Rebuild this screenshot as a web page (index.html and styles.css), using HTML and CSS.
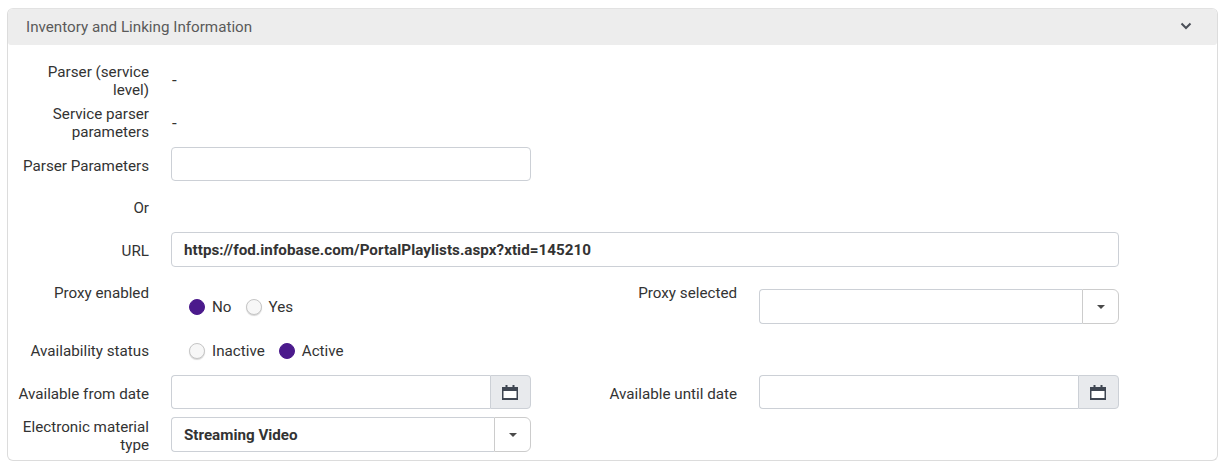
FILE: index.html
```html
<!DOCTYPE html>
<html lang="en">
<head>
<meta charset="utf-8">
<title>Inventory and Linking Information</title>
<link rel="stylesheet" href="styles.css">
</head>
<body>
<section class="panel">
  <header class="panel-head">
    <h2 class="panel-title">Inventory and Linking Information</h2>
    <svg class="chev" width="12" height="8" viewBox="0 0 12 8"><path d="M1.500 1.500 6 6l4.500-4.500" fill="none" stroke="#4a4f57" stroke-width="2"/></svg>
  </header>
  <div class="panel-body">
    <div class="row r1"><div class="label">Parser (service level)</div><div class="value">-</div></div>
    <div class="row r2"><div class="label">Service parser parameters</div><div class="value">-</div></div>
    <div class="row r3"><div class="label">Parser Parameters</div><div class="control half"><div class="input"></div></div></div>
    <div class="row r4"><div class="label">Or</div></div>
    <div class="row r5"><div class="label">URL</div><div class="control full"><div class="input bold url">https://fod.infobase.com/PortalPlaylists.aspx?xtid=145210</div></div></div>
    <div class="row r6">
      <div class="label top">Proxy enabled</div>
      <div class="control half radios low">
        <span class="radio on"></span><span class="rlabel">No</span>
        <span class="radio"></span><span class="rlabel">Yes</span>
      </div>
      <div class="label second top">Proxy selected</div>
      <div class="control half"><div class="group"><div class="input flat"></div><div class="caret-btn"><span class="caret"></span></div></div></div>
    </div>
    <div class="row r7">
      <div class="label">Availability status</div>
      <div class="control half radios">
        <span class="radio"></span><span class="rlabel">Inactive</span>
        <span class="radio on"></span><span class="rlabel">Active</span>
      </div>
    </div>
    <div class="row r8">
      <div class="label">Available from date</div>
      <div class="control half"><div class="group date"><div class="input flat"></div><div class="cal-btn"><svg width="16" height="16" viewBox="0 0 16 16"><path d="M0 3.500h16V16H0z" fill="#fff"/><path d="M0 3h16v4H0zM0 14h16v2H0zM0 3h1.500v13H0zM14.500 3H16v13h-1.500z" fill="#3f4652"/><path d="M3.500 1h2v3h-2zM10.500 1h2v3h-2z" fill="#3f4652"/></svg></div></div></div>
      <div class="label second">Available until date</div>
      <div class="control half"><div class="group date"><div class="input flat"></div><div class="cal-btn"><svg width="16" height="16" viewBox="0 0 16 16"><path d="M0 3.500h16V16H0z" fill="#fff"/><path d="M0 3h16v4H0zM0 14h16v2H0zM0 3h1.500v13H0zM14.500 3H16v13h-1.500z" fill="#3f4652"/><path d="M3.500 1h2v3h-2zM10.500 1h2v3h-2z" fill="#3f4652"/></svg></div></div></div>
    </div>
    <div class="row r9">
      <div class="label">Electronic material type</div>
      <div class="control half"><div class="group"><div class="input flat bold">Streaming Video</div><div class="caret-btn"><span class="caret"></span></div></div></div>
    </div>
  </div>
</section>
</body>
</html>
```
FILE: styles.css
```css
* { box-sizing: border-box; }
html, body { margin: 0; padding: 0; background: #fff; }
body {
  padding: 8px 7px 0;
  font-family: Roboto, "Liberation Sans", sans-serif;
  font-size: 15.2px;
  line-height: 18px;
  color: #333;
}
.panel {
  width: 1211px;
  height: 453px;
  border: 1px solid #dcdcdc;
  border-top-color: #e2e2e2;
  border-radius: 6px;
}
.panel-head {
  height: 36px;
  background: #ededed;
  border-radius: 5px 5px 3px 3px;
  display: flex;
  align-items: center;
  justify-content: space-between;
  padding: 0 25px 0 18px;
}
.panel-title { margin: 0; font-size: 15.2px; font-weight: 400; color: #5a5a5a; }
.chev { display: block; margin-top: -3px; }
.panel-body { padding-top: 18px; }
.row { display: flex; align-items: center; }
.label { width: 141px; padding-left: 8px; text-align: right; flex: none; }
.label.top { align-self: flex-start; margin-top: -5px; }
.label.second { width: 206px; }
.value { margin-left: 22px; padding-left: 1px; font-size: 17px; }
.control { margin-left: 22px; flex: none; }
.half { width: 360px; }
.full { width: 948px; }
.input {
  height: 34px;
  background: #fff;
  border: 1px solid #ccd0d6;
  border-radius: 4px;
  padding: 1px 12px 0;
  display: flex;
  align-items: center;
}
.bold { font-weight: 700; }
.url { letter-spacing: 0.035px; }
.group { display: flex; height: 34px; }
.group .flat { flex: 1; height: auto; border-radius: 4px 0 0 4px; border-right: 0; }
.caret-btn {
  width: 37px;
  border: 1px solid #ccc;
  border-radius: 0 6px 6px 0;
  display: flex;
  align-items: center;
  justify-content: center;
}
.caret { width: 0; height: 0; border: 4px solid transparent; border-top-color: #4a4a4a; border-bottom: 0; }
.cal-btn {
  width: 41px;
  padding-right: 1px;
  background: #e8eaed;
  border: 1px solid #ccd0d6;
  border-radius: 0 4px 4px 0;
  display: flex;
  align-items: center;
  justify-content: center;
}
.cal-btn svg { display: block; }
.radios { display: flex; align-items: center; padding-left: 18px; }
.radios.low { align-self: flex-start; margin-top: 8px; }
.radio {
  width: 16px;
  height: 16px;
  border-radius: 50%;
  background: #f7f7f7;
  border: 1px solid #c6c6c6;
  box-shadow: 0 1px 1px #d8d8d8;
  flex: none;
}
.radio.on { background: #4b1a8c; border-color: #4b1a8c; box-shadow: none; }
.rlabel { margin: 0 14px 0 7px; padding-top: 1px; }
.r1, .r2 { height: 36px; margin-bottom: 6px; }
.r1 .value { padding-bottom: 2px; }
.r3 { height: 34px; }
.r3 .label { padding-top: 4px; }
.r4 { height: 34px; margin-top: 10px; }
.r5 { height: 35px; margin-top: 7px; }
.r5 .label { padding-top: 3px; }
.r5 .input { height: 35px; }
.r6 { height: 35px; margin-top: 22px; }
.r6 .group { height: 35px; }
.r7 { height: 34px; margin-top: 10px; }
.r7 .radios { padding-bottom: 1px; }
.r8 { height: 34px; margin-top: 7px; }
.r8 .label { padding-top: 3px; }
.r9 { height: 35px; margin-top: 8px; }
.r9 .label { padding-top: 3px; }
.r9 .group { height: 35px; }
```
